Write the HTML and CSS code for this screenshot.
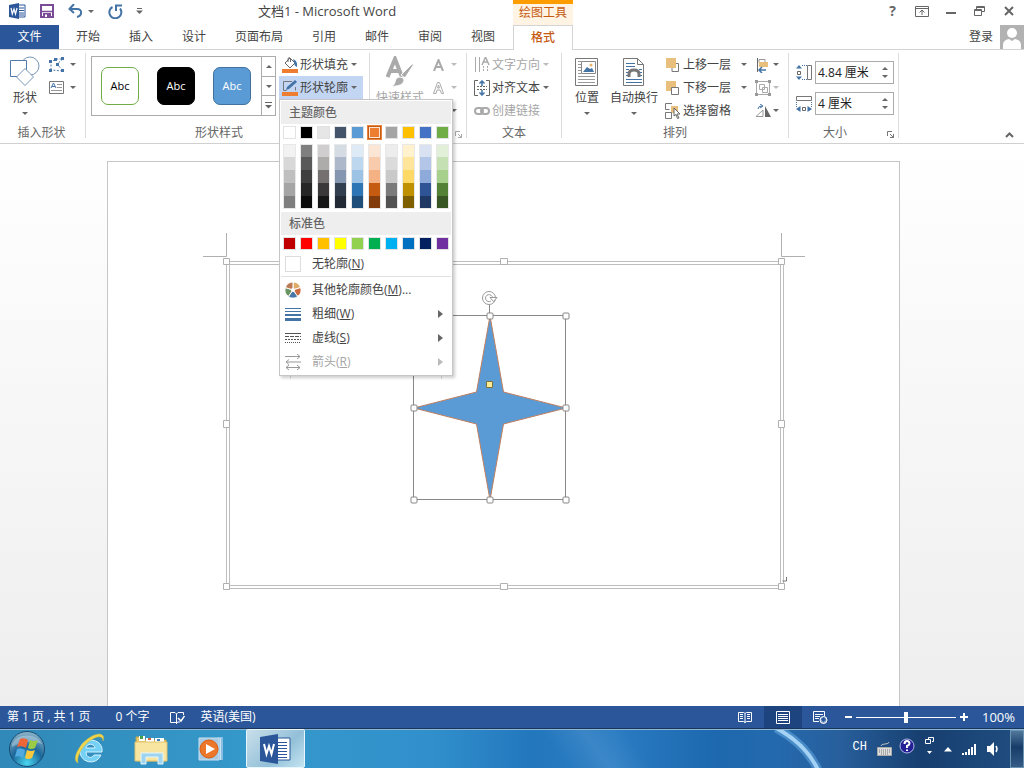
FILE: index.html
```html
<!DOCTYPE html>
<html lang="zh-CN">
<head>
<meta charset="utf-8">
<title>文档1 - Microsoft Word</title>
<link rel="stylesheet" href="styles.css">
</head>
<body>
<div class="app">
  <header class="titlebar">
    <div class="quick">
      <svg class="word-logo" width="17" height="16" viewBox="0 0 17 16"><path d="M8 2h8v12H8z" fill="#fff" stroke="#2b579a"/><path d="M10 5h5M10 7.500h5M10 10h5M10 12h5" stroke="#2b579a"/><path d="M0 2 10 0v16L0 14z" fill="#2b579a"/><path d="m2 5 1.300 6L5 6l1.500 5L8 5" fill="none" stroke="#fff" stroke-width="1.200"/></svg>
      <button class="plain" aria-label="保存"><svg width="14" height="14" viewBox="0 0 14 14"><path d="M1 1h12v12H1z" fill="#fff" stroke="#7a4b96" stroke-width="2"/><path d="M2 7.500h10" stroke="#7a4b96" stroke-width="1.500"/><path d="M3 9h8v5H3z" fill="#7a4b96"/><path d="M5 10.500h2V13H5z" fill="#fff"/></svg></button>
      <button class="plain undo" aria-label="撤消"><svg width="15" height="14" viewBox="0 0 15 14"><path d="M2 5h7c6 0 5 7 0 8" fill="none" stroke="#4473a5" stroke-width="2"/><path d="M6 0 1.500 5 6 9" fill="none" stroke="#4473a5" stroke-width="2"/></svg><i class="caret"></i></button>
      <button class="plain redo" aria-label="重复"><svg width="15" height="15" viewBox="0 0 15 15"><path d="M4.500 3A6 6 0 1 0 12 4.500" fill="none" stroke="#4473a5" stroke-width="2"/><path d="M8 7V1.500h6" fill="none" stroke="#4473a5" stroke-width="2"/></svg></button>
      <button class="plain more" aria-label="自定义快速访问工具栏"><svg width="7" height="6" viewBox="0 0 7 6"><path d="M1 .5h5" stroke="#666"/><path d="M0 2.500h7L3.500 6z" fill="#666"/></svg></button>
    </div>
    <h1 class="title">文档1 - Microsoft Word</h1>
    <div class="context-title">绘图工具</div>
    <div class="window-controls">
      <button class="plain" aria-label="帮助"><b>?</b></button>
      <button class="plain" aria-label="功能区显示选项"><svg width="14" height="11" viewBox="0 0 14 11"><path d="M.5.5h13v10H.5zM.5 2.500h13M7 9V4.500M4.500 6.500 7 4l2.500 2.500" fill="none" stroke="#666"/></svg></button>
      <button class="plain" aria-label="最小化"><svg width="10" height="9" viewBox="0 0 10 9"><path d="M0 6h10" stroke="#666" stroke-width="2"/></svg></button>
      <button class="plain" aria-label="还原"><svg width="11" height="10" viewBox="0 0 11 10"><path d="M2.500 3V.5h8v5H8M2.500 1.500h8M.5 3.500h7v6h-7zM.5 4.500h7" fill="none" stroke="#666"/></svg></button>
      <button class="plain" aria-label="关闭"><svg width="10" height="10" viewBox="0 0 10 10"><path d="m1 1 8 8M9 1 1 9" stroke="#666" stroke-width="2"/></svg></button>
    </div>
  </header>

  <nav class="tabs">
    <button class="tab file">文件</button>
    <div class="tab-list">
      <button class="tab">开始</button><button class="tab">插入</button><button class="tab">设计</button><button class="tab">页面布局</button><button class="tab">引用</button><button class="tab">邮件</button><button class="tab">审阅</button><button class="tab">视图</button>
    </div>
    <button class="tab active">格式</button>
    <a class="login" href="#">登录
      <svg width="24" height="24" viewBox="0 0 24 24"><path d="M0 0h24v24H0z" fill="#b2b2b2"/><circle cx="12" cy="8" r="5" fill="#fff"/><path d="M3 24v-4q0-5 6-6l3 2 3-2q6 1 6 6v4z" fill="#fff"/></svg></a>
  </nav>

  <section class="ribbon">
    <div class="group g-insert">
      <div class="group-body">
        <button class="big"><svg width="30" height="32" viewBox="0 0 30 32"><circle cx="20" cy="10" r="9" fill="#fff" stroke="#7795b5"/><path d="M.5 4.500h16v16H.5z" fill="#fff" stroke="#4f7bab"/><path d="M15 12.500 23.500 21 15 29.500 6.500 21z" fill="#fff" stroke="#7795b5"/></svg><span>形状</span><i class="caret"></i></button>
        <div class="stack">
          <button class="row"><svg width="16" height="16" viewBox="0 0 16 16"><path d="M2 13V5l5-3h7L8 7l6 7z" fill="none" stroke="#4f7bab" stroke-dasharray="2 1.500"/><path d="M0 3h3v3H0zM5 1h3v3H5zM12 0h3v3h-3zM7 6h3v3H7zM0 12h3v3H0zM12 12h3v3h-3z" fill="#4473a5"/></svg><i class="caret"></i></button>
          <button class="row"><svg width="15" height="13" viewBox="0 0 15 13"><path d="M.5.5h14v12H.5z" fill="#fff" stroke="#777"/><path d="m2 7 2.500-5L7 7M3 5.500h3" fill="none" stroke="#4473a5"/><path d="M8 3.500h5M8 6.500h5M2 9.500h11" stroke="#999"/></svg><i class="caret"></i></button>
        </div>
      </div>
      <div class="group-label">插入形状</div>
    </div>

    <div class="group g-styles">
      <div class="group-body">
        <div class="gallery">
          <button class="preset outline">Abc</button>
          <button class="preset black">Abc</button>
          <button class="preset blue">Abc</button>
          <div class="gallery-scroll">
            <button aria-label="上一行"><i class="caret up"></i></button>
            <button aria-label="下一行"><i class="caret"></i></button>
            <button aria-label="其他"><svg width="7" height="7" viewBox="0 0 7 7"><path d="M0 .5h7" stroke="#666"/><path d="M0 3h7L3.500 6.500z" fill="#666"/></svg></button>
          </div>
        </div>
        <div class="stack">
          <button class="row"><svg width="16" height="16" viewBox="0 0 16 16"><path d="m3 6 5-5 5 5-5 5z" fill="#fff" stroke="#666"/><path d="M6 5V1.500q1.500-2 2.500 0V5" fill="none" stroke="#666"/><path d="M11 2q5 2 4 8-3-1-3-5" fill="#4473a5"/><path d="M0 12h16v4H0z" fill="#ed7d31"/></svg><span>形状填充</span><i class="caret"></i></button>
          <div class="dropdown">
            <button class="row open" aria-expanded="true"><svg width="16" height="16" viewBox="0 0 16 16"><path d="M10 1.500H1.500v9h3M13.500 7v3.500" fill="none" stroke="#777"/><path d="m4 10 1-3 8-7 2 2-8 7z" fill="#4473a5"/><path d="M0 12h16v4H0z" fill="#ed7d31"/></svg><span>形状轮廓</span><i class="caret"></i></button>
            <div class="menu">
              <div class="menu-head">主题颜色</div>
              <div class="swatches" data-set="theme"></div>
              <div class="shades"></div>
              <div class="menu-head">标准色</div>
              <div class="swatches" data-set="standard"></div>
              <button class="menu-item none"><i class="empty"></i><span>无轮廓(<u>N</u>)</span></button>
              <hr>
              <button class="menu-item"><svg width="16" height="16" viewBox="0 0 16 16"><g stroke="#fff"><path d="M8 8V0a8 8 0 0 1 7.600 5.500z" fill="#dcab67"/><path d="m8 8 7.600-2.500A8 8 0 0 1 12.700 14.500z" fill="#cb6b42"/><path d="m8 8 4.700 6.500a8 8 0 0 1-9.400 0z" fill="#4878aa"/><path d="m8 8-4.700 6.500A8 8 0 0 1 .4 5.500z" fill="#6a9461"/><path d="M8 8 .4 5.500A8 8 0 0 1 8 0z" fill="#bb7954"/></g><circle cx="8" cy="8" r="2" fill="#fff"/></svg><span>其他轮廓颜色(<u>M</u>)...</span></button>
              <button class="menu-item"><svg width="16" height="14" viewBox="0 0 16 14"><path d="M0 1.500h16" stroke="#4473a5"/><path d="M0 4h16v1H0zM0 7h16v2H0zM0 11h16v3H0z" fill="#4473a5"/></svg><span>粗细(<u>W</u>)</span><i class="caret right"></i></button>
              <button class="menu-item"><svg width="16" height="12" viewBox="0 0 16 12"><path d="M0 1.500h16" stroke="#555"/><path d="M0 4.500h16" stroke="#555" stroke-dasharray="4 1"/><path d="M0 7.500h16" stroke="#555" stroke-dasharray="2 1"/><path d="M0 10.500h16" stroke="#555" stroke-dasharray="1 1"/></svg><span>虚线(<u>S</u>)</span><i class="caret right"></i></button>
              <button class="menu-item" disabled><svg width="16" height="16" viewBox="0 0 16 16"><path d="M0 2.500h15M12 0l3 2.500L12 5M1 8h15M4 5.500 1 8l3 2.500M1 13.500h14M4 11l-3 2.500L4 16M12 11l3 2.500-3 2.500" fill="none" stroke="#999"/></svg><span>箭头(<u>R</u>)</span><i class="caret right"></i></button>
            </div>
          </div>
        </div>
      </div>
      <div class="group-label">形状样式</div>
    </div>

    <div class="group g-art">
      <div class="group-body">
        <button class="big" disabled><svg width="28" height="32" viewBox="0 0 28 32"><path d="M1.500 21 9 3l7 18M5 15h9" fill="none" stroke="#aaa" stroke-width="4"/><path d="m28 8-9 14-4-3L26 8z" fill="#aaa" stroke="#fff"/><path d="M14 21q6 1 3 6-4 4-12 3 4-1 4-4 1-5 5-5" fill="#aaa" stroke="#fff"/></svg><span>快速样式</span></button>
        <div class="stack">
          <button class="row" disabled><svg width="11" height="12" viewBox="0 0 11 12"><path d="M1 12 5.500 1 10 12M3 8h5" fill="none" stroke="#aaa" stroke-width="2"/></svg><i class="caret"></i></button>
          <button class="row" disabled><svg width="11" height="12" viewBox="0 0 11 12"><path d="M.5 11.500 4.500.5h2l4 11h-2L7 8H4l-1 3.500zM4.500 6h2l-1-3z" fill="none" stroke="#aaa"/></svg><i class="caret"></i></button>
          <button class="row effect"><i class="caret"></i></button>
        </div>
      </div>
      <div class="group-label"><svg class="launcher pale" width="7" height="7" viewBox="0 0 7 7"><path d="M.5 5V.5H5M3 3l3.500 3.500M6.500 3v3.500H3" fill="none" stroke="currentColor"/></svg></div>
    </div>

    <div class="group g-text">
      <div class="group-body">
        <div class="stack">
          <button class="row" disabled><svg width="16" height="16" viewBox="0 0 16 16"><path d="M1.500 0v15M5.500 0v15" stroke="#aaa"/><path d="M9.500 9v6M13.500 9v6" stroke="#aaa" stroke-dasharray="2 1"/><path d="m8 8 3.500-8L15 8M9 5h5" fill="none" stroke="#aaa" stroke-width="1.500"/></svg><span>文字方向</span><i class="caret"></i></button>
          <button class="row"><svg width="16" height="16" viewBox="0 0 16 16"><path d="M4 .5H.5v15H4M12 .5h3.500v15H12" fill="none" stroke="#666"/><path d="M3 6.500h10M3 9.500h10" stroke="#666" stroke-dasharray="2 1"/><path d="M8 1v5M8 10v5M5.500 3.500 8 1l2.500 2.500M5.500 12.500 8 15l2.500-2.500" fill="none" stroke="#4473a5" stroke-width="1.500"/></svg><span>对齐文本</span><i class="caret"></i></button>
          <button class="row" disabled><svg width="16" height="10" viewBox="0 0 16 10"><rect x="1" y="2" width="8" height="6" rx="3" fill="none" stroke="#aaa" stroke-width="2"/><rect x="7" y="2" width="8" height="6" rx="3" fill="none" stroke="#aaa" stroke-width="2"/></svg><span>创建链接</span></button>
        </div>
      </div>
      <div class="group-label">文本</div>
    </div>

    <div class="group g-arrange">
      <div class="group-body">
        <button class="big"><svg width="24" height="32" viewBox="0 0 24 32"><path d="M.5 2.500h22v27H.5z" fill="#fff" stroke="#777"/><path d="M3 5.500h3M3 8.500h3M3 11.500h3M3 14.500h3M3 17.500h3M3 20.500h17M3 23.500h17M3 26.500h17" stroke="#999"/><path d="M6.500 5.500h14v12h-14z" fill="#fff" stroke="#888"/><path d="m8 16 4-5 3 2 2-1 2 4z" fill="#4473a5"/><circle cx="16" cy="9" r="1.500" fill="#e7b36a"/></svg><span>位置</span><i class="caret"></i></button>
        <button class="big wrap"><svg width="22" height="32" viewBox="0 0 22 32"><path d="M.5 2.500h14l6 6v21H.5zM14.500 2.500v6h6" fill="#fff" stroke="#777"/><path d="M3 7.500h9M3 10.500h9M3 13.500h3M16 13.500h3M3 16.500h2M17 16.500h2M3 19.500h2M17 19.500h2M3 23.500h16M3 26.500h16" stroke="#4473a5"/><path d="M6 21v-3q0-4 5-4t5 4v3" fill="none" stroke="#777" stroke-width="3"/></svg><span>自动换行</span><i class="caret"></i></button>
        <div class="stack layers">
          <button class="row"><svg width="15" height="16" viewBox="0 0 15 16"><path d="M7 8v6.500h6.500v-8H10" fill="none" stroke="#777"/><path d="M1 1h10v10H1z" fill="#e8bf7d"/></svg><span>上移一层</span><i class="caret"></i></button>
          <button class="row"><svg width="15" height="16" viewBox="0 0 15 16"><path d="M1 1h10v10H1z" fill="#e8bf7d"/><path d="M6.500 7.500h7v7h-7z" fill="#fff" stroke="#777"/></svg><span>下移一层</span><i class="caret"></i></button>
          <button class="row"><svg width="15" height="16" viewBox="0 0 15 16"><path d="M6 3h7v7H6z" fill="#e8bf7d"/><path d="M7 .5H.5v6h4M.5 9.500h6v6h-6z" fill="none" stroke="#777"/><path d="m9 5 6 6h-3l2 4-1.500.5-1.500-4L9 13z" fill="#fff" stroke="#666"/></svg><span>选择窗格</span></button>
        </div>
        <div class="stack">
          <button class="row"><svg width="16" height="16" viewBox="0 0 16 16"><path d="M2.500 1v14" stroke="#666"/><path d="M4 2.500h6v3H4z" fill="#fff" stroke="#999"/><path d="M4 5h9v5H4z" fill="#e8bf7d"/><path d="M4 13h7M7 10l-3 3 3 3" fill="none" stroke="#4473a5" stroke-width="1.500"/></svg><i class="caret"></i></button>
          <button class="row" disabled><svg width="16" height="16" viewBox="0 0 16 16"><path d="M1.500 1.500h13v13h-13zM4.500 4.500h5v5h-5zM7.500 7.500h5v5h-5z" fill="none" stroke="#aaa"/><path d="M0 0h3v3H0zM13 0h3v3h-3zM0 13h3v3H0zM13 13h3v3h-3z" fill="#999"/></svg><i class="caret"></i></button>
          <button class="row"><svg width="16" height="14" viewBox="0 0 16 14"><path d="M1 12.500h7V6z" fill="#fff" stroke="#999"/><path d="M10 2v11h6z" fill="#666"/><path d="M3 5q0-3 4-3M5 0l3 2-3 2" fill="none" stroke="#4473a5"/></svg><i class="caret"></i></button>
        </div>
      </div>
      <div class="group-label">排列</div>
    </div>

    <div class="group g-size">
      <div class="group-body">
        <label class="measure"><svg width="16" height="17" viewBox="0 0 16 17"><path d="M11.500 1.500h4v14h-4z" fill="#fff" stroke="#777"/><path d="M6 1.500h5M6 15.500h5" stroke="#4473a5" stroke-dasharray="1 1"/><path d="M1.500 7.500h3v3h-3z" fill="none" stroke="#666"/><path d="M0 4.500 3 1l3 3.500zM0 12.500 3 16l3-3.500z" fill="#4473a5"/></svg>
          <span class="spin"><input type="text" value="4.84 厘米" aria-label="高度"><span class="spin-buttons"><button aria-label="增加高度"><i class="caret up"></i></button><button aria-label="减小高度"><i class="caret"></i></button></span></span></label>
        <label class="measure"><svg width="16" height="17" viewBox="0 0 16 17"><path d="M.5 1.500h15v4H.5z" fill="#fff" stroke="#777"/><path d="M.5 7v5M15.500 7v5" stroke="#4473a5" stroke-dasharray="1 1"/><path d="M6.500 12.500h3v3h-3z" fill="none" stroke="#666"/><path d="M4.500 11v6L0 14zM11.500 11v6l4.500-3z" fill="#4473a5"/></svg>
          <span class="spin"><input type="text" value="4 厘米" aria-label="宽度"><span class="spin-buttons"><button aria-label="增加宽度"><i class="caret up"></i></button><button aria-label="减小宽度"><i class="caret"></i></button></span></span></label>
      </div>
      <div class="group-label">大小<svg class="launcher" width="7" height="7" viewBox="0 0 7 7"><path d="M.5 5V.5H5M3 3l3.500 3.500M6.500 3v3.500H3" fill="none" stroke="currentColor"/></svg></div>
    </div>
    <button class="plain collapse" aria-label="折叠功能区"><svg width="9" height="6" viewBox="0 0 9 6"><path d="m1 5 3.500-3.500L8 5" fill="none" stroke="#666" stroke-width="2"/></svg></button>
  </section>

  <main class="workspace">
    <div class="page">
      <svg class="drawing" width="602" height="362" viewBox="203 232 602 362">
        <path d="M203 256.500h23.500V233M805 256.500h-23.500V233" fill="none" stroke="#b0b0b0"/>
        <path d="M226.500 261.500h557v327h-557zM229.500 264.500h551v321h-551z" fill="none" stroke="#bebebe"/>
        <path d="M786.500 577v4h-4" fill="none" stroke="#777"/>
        <g fill="#fff" stroke="#b0b0b0">
          <path d="M223.500 258.500h6v6h-6zM500.500 258.500h7v6h-7zM778.500 258.500h6v6h-6zM223.500 420.500h6v7h-6zM778.500 420.500h6v7h-6zM223.500 583.500h6v6h-6zM500.500 583.500h7v6h-7zM778.500 583.500h6v6h-6z"/>
        </g>
        <path d="M413.500 315.500h152v184h-152zM489.500 303v12" fill="none" stroke="#888"/>
        <path d="M290.500 370v9M441.500 370v9" stroke="#ddd"/>
        <path d="m490 316 13.500 76 62.500 16-62.500 16L490 500l-13.500-76-62.500-16 62.500-16z" fill="#5b9bd5" stroke="#c07f5e"/>
        <g fill="#fff" stroke="#888">
          <rect x="411" y="313" width="6" height="6" rx="1"/><rect x="487" y="313" width="6" height="6" rx="1"/><rect x="563" y="313" width="6" height="6" rx="1"/>
          <rect x="411" y="405" width="6" height="6" rx="1"/><rect x="563" y="405" width="6" height="6" rx="1"/>
          <rect x="411" y="497" width="6" height="6" rx="1"/><rect x="487" y="497" width="6" height="6" rx="1"/><rect x="563" y="497" width="6" height="6" rx="1"/>
        </g>
        <path d="M486.500 381.500h6v6h-6z" fill="#ffec94" stroke="#7a7340"/>
        <circle cx="489" cy="298" r="6.500" fill="#fff" stroke="#999"/>
        <path d="M491 301a3.500 3.500 0 1 1 1.500-3" fill="none" stroke="#999"/>
        <path d="M490 297.500h7l-3.500 4z" fill="#fff" stroke="#999"/>
      </svg>
    </div>
  </main>

  <footer class="statusbar">
    <span class="pages">第 1 页 , 共 1 页</span>
    <span class="words">0 个字</span>
    <svg class="proof" width="15" height="13" viewBox="0 0 15 13"><path d="M6 11.500H.5v-10H5L6.500 3v10M6.500 3 8 1.500h5.500V4M6.500 12 8 11h2" fill="none" stroke="#fff"/><path d="m8 7 3 3 3.500-5" fill="none" stroke="#fff" stroke-width="1.500"/></svg>
    <span>英语(美国)</span>
    <div class="views">
      <button class="view" aria-label="阅读视图"><svg width="14" height="12" viewBox="0 0 14 12"><path d="M.5 1.500h5L7 2.500l1.500-1h5v9h-5L7 11.500l-1.500-1h-5zM7 3v9M2 3.500h3M2 5.500h3M2 7.500h3M9 3.500h3M9 5.500h3M9 7.500h3" fill="none" stroke="#fff"/></svg></button>
      <button class="view current" aria-label="页面视图"><svg width="14" height="13" viewBox="0 0 14 13"><path d="M.5.5h13v12H.5zM2 3.500h10M2 5.500h10M2 7.500h10M2 9.500h10" fill="none" stroke="#fff"/></svg></button>
      <button class="view" aria-label="Web 版式视图"><svg width="15" height="13" viewBox="0 0 15 13"><path d="M6 10.500H.5v-10h11V5M2 3.500h8M2 5.500h5M2 7.500h4" fill="none" stroke="#fff"/><circle cx="10.500" cy="9" r="3.500" fill="#8da8cf" stroke="#fff"/><path d="m8 8 3-2 2 3-3 2z" fill="#2b579a"/></svg></button>
    </div>
    <div class="zoom">
      <button class="plain" aria-label="缩小"><svg width="7" height="8" viewBox="0 0 7 8"><path d="M0 4h7" stroke="#fff" stroke-width="2"/></svg></button>
      <input type="range" min="0" max="100" value="50" aria-label="显示比例">
      <button class="plain" aria-label="放大"><svg width="8" height="8" viewBox="0 0 8 8"><path d="M0 4h8M4 0v8" stroke="#fff" stroke-width="2"/></svg></button>
    </div>
    <span class="percent">100%</span>
  </footer>

  <footer class="taskbar">
    <button class="plain orb" aria-label="开始"><svg width="38" height="38" viewBox="0 0 38 38"><defs><radialGradient id="orb" cx=".5" cy=".9" r=".9"><stop offset="0" stop-color="#49d6f0"/><stop offset=".5" stop-color="#1c679b"/><stop offset="1" stop-color="#8fb6ca"/></radialGradient></defs><circle cx="19" cy="19" r="17.500" fill="url(#orb)" stroke="#164a70"/><path d="M4 14a16 13 0 0 1 30 0q-15-5-30 3z" fill="#fff" opacity=".3"/><path d="M12 9q4-2 8 1l-2 8q-4-3-9-1z" fill="#ee6538"/><path d="M22 10q4 2 8 0l-3 8q-4 2-7 0z" fill="#9bcb45"/><path d="M9 19q4-2 8 1l-2 8q-4-3-8-1z" fill="#51a9df"/><path d="M19 20q4 2 8 0l-3 8q-4 2-7 0z" fill="#fac83c"/></svg></button>
    <button class="plain" aria-label="Internet Explorer"><svg width="34" height="34" viewBox="0 0 34 34"><path d="M17 8a11 11 0 1 0 11 15h-7c-2 4-8 3-8-3h16c1-7-4-12-12-12m-4 8c1-5 8-5 9 0z" fill="#75d0f5" stroke="#d4f3ff" fill-rule="evenodd"/><path d="M5 31C-4 27 12 2 27 2q5 1 3 7 0-5-6-4C12 9 3 23 5 31" fill="#efd54b" stroke="#d2bb3e" stroke-width=".5"/></svg></button>
    <button class="plain" aria-label="文件资源管理器"><svg width="34" height="32" viewBox="0 0 34 32"><path d="M2 4h7l2 3h21v21H3z" fill="#e9ca68" stroke="#c2a44b"/><path d="M5 3h6v5H5zM12 5h8v4h-8zM21 5h9v5h-9z" fill="#fff"/><path d="M6 3h3v3H6z" fill="#40a34c"/><path d="M14 5h3v2h-3z" fill="#d7603c"/><path d="M23 6h3v2h-3z" fill="#4286b8"/><path d="M1 9h32v19H1z" fill="#f8e6a0" stroke="#dfc270"/><path d="M7 31V20h22v11h-5v-7H12v7z" fill="#9ed4f0" stroke="#e4f6ff"/></svg></button>
    <button class="plain" aria-label="Windows Media Player"><svg width="26" height="26" viewBox="0 0 26 26"><path d="M20 1h5v23h-5z" fill="#87bde0"/><path d="M22.500 2v22" stroke="#c8e5f7"/><path d="M1 2h20v22H1z" fill="#a9c9e2" stroke="#c8e0f1"/><circle cx="11" cy="13" r="9" fill="#ec762a" stroke="#d95f13"/><path d="m8 8 9 5-9 5z" fill="#fff"/></svg></button>
    <button class="plain running" aria-label="Microsoft Word"><svg width="31" height="30" viewBox="0 0 31 30"><path d="M14 4h16v22H14z" fill="#fff" stroke="#2b579a"/><path d="M18 8.500h9M18 11.500h9M18 14.500h9M18 17.500h9M18 20.500h9M18 23.500h9" stroke="#2b579a"/><path d="M0 3 18 0v30L0 27z" fill="#2b579a"/><path d="m4 10 2.500 10L9 12l2.500 8L14 10" fill="none" stroke="#fff" stroke-width="2"/></svg></button>
    <div class="tray">
      <svg class="streak" width="70" height="38" viewBox="0 0 70 38"><path d="M4-2Q34 14 46 40" fill="none" stroke="#5fa3dc" stroke-width="9" opacity=".6"/><path d="M4-2Q34 14 46 40" fill="none" stroke="#a4d2f5" stroke-width="4"/></svg>
      <span class="lang">CH</span>
      <svg width="15" height="14" viewBox="0 0 15 14"><path d="M4 4q0-2 4-2t4-2" fill="none" stroke="#bbb"/><path d="M.5 5.500h14v8H.5z" fill="#ddd" stroke="#aaa"/><path d="M2 8h11M2 10h11M4 12h7" stroke="#777" stroke-dasharray="1 1"/></svg>
      <svg class="help" width="16" height="16" viewBox="0 0 16 16"><circle cx="8" cy="8" r="7" fill="#241f95" stroke="#b1b5e5"/><path d="M5.500 6q0-3 2.500-3t2.500 2.500Q10.500 7 8 8v2M8 11.500v1.500" fill="none" stroke="#fff" stroke-width="2"/></svg>
      <svg class="langbar" width="9" height="18" viewBox="0 0 9 18"><path d="M3.500 2V.5h5v4H7M.5 2.500h5v4h-5z" fill="none" stroke="#fff"/><path d="M2 14h5l-2.500 3z" fill="#fff"/></svg>
      <svg width="8" height="5" viewBox="0 0 8 5"><path d="m4 0 4 4.500H0z" fill="#fff"/></svg>
      <svg width="15" height="13" viewBox="0 0 15 13"><path d="M1 10v2M4 9v3M7 6v6M10 4v8M13 1v11" stroke="#fff" stroke-width="2"/></svg>
      <svg width="13" height="14" viewBox="0 0 13 14"><path d="M0 4h3l4-4v14l-4-4H0z" fill="#fff"/><path d="M9 4q2 3 0 6" fill="none" stroke="#fff" stroke-width="1.500"/></svg>
      <button class="show-desktop" aria-label="显示桌面"></button>
    </div>
  </footer>
</div>
<script src="script.js"></script>
</body>
</html>
```

FILE: styles.css
```css
* { box-sizing: border-box; }
body { margin: 0; font: 12px/16px "Open Sans", "Noto Sans CJK SC", sans-serif; color: #444; }
button, input { font: inherit; color: inherit; margin: 0; padding: 0; border: 0; background: none; }
button { display: flex; align-items: center; white-space: nowrap; }
button:disabled { color: #a6a6a6; }
svg { display: block; flex: none; }
.app { display: flex; flex-direction: column; height: 100vh; overflow: hidden; background: #fff; }
.plain { justify-content: center; }

.caret { flex: none; width: 0; height: 0; border: 3px solid transparent; border-top-color: #666; border-bottom: 0; }
.caret.up { border-top: 0; border-bottom: 3px solid #666; }
.caret.right { border: 4px solid transparent; border-left: 5px solid #666; border-right: 0; }
:disabled .caret { border-top-color: #bbb; }
:disabled .caret.right { border-top-color: transparent; border-left-color: #bbb; }

.titlebar { flex: none; display: grid; grid-template-columns: 141px 372px 60px 1fr; height: 25px; }
.quick { display: flex; align-items: center; padding: 0 0 3px 9px; }
.quick .plain { margin-left: 14px; }
.quick .more { margin-left: 13px; }
.quick .undo { gap: 5px; }
.title { margin: 0; font-size: 13px; font-weight: 400; line-height: 23px; text-align: center; white-space: nowrap; }
.context-title { border-top: 4px solid #ff9c00; background: #fff4e3; color: #c55a11; line-height: 18px; text-align: center; }
.window-controls { display: flex; justify-content: flex-end; padding: 0 1px 3px 0; }
.window-controls .plain { width: 29px; }
.window-controls b { font-size: 14px; color: #666; }

.tabs { flex: none; display: flex; height: 25px; border-bottom: 1px solid #d4d4d4; }
.tab { height: 24px; }
.tab.file { width: 59px; justify-content: center; background: #2b579a; color: #fff; }
.tab-list { display: flex; gap: 29px; padding: 0 18px 0 17px; }
.tab.active { width: 60px; height: 25px; justify-content: center; border: 1px solid #d4d4d4; border-bottom: 0; background: #fff; color: #c55a11; font-weight: 500; }
.login { display: flex; align-items: center; gap: 7px; height: 24px; margin-left: auto; color: #444; text-decoration: none; }

.ribbon { flex: none; display: flex; height: 94px; border-bottom: 1px solid #d0d0d0; }
.group { flex: none; display: flex; flex-direction: column; margin: 3px 0 5px; border-right: 1px solid #dcdcdc; }
.group-body { flex: 1; display: flex; align-items: flex-start; }
.group-label { position: relative; height: 16px; color: #666; line-height: 22px; text-align: center; }
.g-insert { width: 86px; padding-left: 10px; }
.g-insert .group-label { padding-right: 12px; }
.g-styles { width: 284px; padding-left: 5px; }
.g-styles .group-label { padding-right: 22px; }
.g-art { width: 97px; padding-left: 6px; }
.g-text { width: 95px; padding-left: 7px; }
.g-text .group-label { padding-right: 7px; }
.g-arrange { width: 227px; padding-left: 10px; }
.g-arrange .group-label { padding-right: 10px; }
.g-size { width: 110px; padding-left: 7px; }
.g-size .group-body { flex-direction: column; gap: 8px; padding-top: 8px; }
.g-size .group-label { padding-right: 24px; }
.launcher { position: absolute; right: 4px; top: 9px; color: #777; }
.launcher.pale { color: #aaa; }

.big { flex-direction: column; min-width: 30px; height: 67px; padding-top: 3px; }
.big span { line-height: 20px; }
.big .caret { margin-top: 4px; }
.stack { display: flex; flex-direction: column; }
.row { height: 23px; gap: 3px; }
.row .caret { margin-left: 1px; }
.g-insert .stack { padding-left: 9px; }
.g-insert .row { width: 27px; justify-content: space-between; }
.g-art .row { width: 24px; justify-content: space-between; }
.g-art .stack { padding-left: 9px; }
.g-art .effect { justify-content: flex-end; }
.g-styles .stack { padding-left: 3px; }
.g-styles .row { width: 84px; padding-left: 3px; gap: 2px; }
.g-styles .row.open { background: #c2d5f2; }
.g-text .row { gap: 2px; }
.g-arrange .wrap { margin-left: 8px; }
.layers { padding: 0 8px 0 7px; }
.layers .row { width: 82px; gap: 3px; }
.layers .caret { margin-left: auto; }
.layers + .stack .row { gap: 1px; }

.gallery { display: flex; gap: 18px; width: 185px; height: 60px; margin-top: 3px; padding-left: 9px; border: 1px solid #ababab; align-items: center; }
.preset { flex: none; width: 38px; height: 38px; border: 1px solid; border-radius: 7px; justify-content: center; font-size: 11px; }
.preset.outline { border-color: #70ad47; color: #000; }
.preset.black { border-color: #000; background: #000; color: #fff; }
.preset.blue { border-color: #41719c; background: #5b9bd5; color: #fff; }
.gallery-scroll { display: flex; flex-direction: column; align-self: stretch; width: 14px; margin-left: -8px; border-left: 1px solid #ababab; }
.gallery-scroll button { flex: 1; justify-content: center; }
.gallery-scroll button + button { border-top: 1px solid #ababab; }

.measure { display: flex; align-items: center; gap: 3px; }
.spin { display: flex; width: 79px; height: 23px; border: 1px solid #ababab; }
.spin input { flex: 1; min-width: 0; padding-left: 2px; color: #222; }
.spin-buttons { display: flex; flex-direction: column; justify-content: space-evenly; width: 11px; }
.collapse { align-self: flex-end; margin-left: auto; padding: 0 10px 5px 0; }

.dropdown { position: relative; }
.menu { position: absolute; z-index: 5; top: 23px; left: 0; width: 174px; padding: 1px; border: 1px solid #c6c6c6; background: #fff; box-shadow: 2px 2px 3px rgba(0, 0, 0, .2); }
.menu-head { height: 23px; padding-left: 8px; background: #eee; color: #666; font-weight: 500; line-height: 24px; }
.swatches, .shades { display: grid; grid-template-columns: repeat(10, 13px); gap: 4px; padding: 2px 0 0 2px; }
.swatch { height: 13px; border: 1px solid #e2e2e2; }
.swatch.selected { border-color: #c55a11; outline: 1px solid #e8833f; box-shadow: inset 0 0 0 1px #fce4d6; }
.shades { padding: 5px 0 3px 2px; }
.shade-column { border: 1px solid #e8e8e8; }
.shade { width: 11px; height: 13px; }
.shade:first-child, .shade:last-child { height: 12px; }
.menu-item { width: 100%; height: 24px; gap: 11px; padding: 0 8px 0 4px; }
.menu-item.none { height: 26px; padding-top: 1px; }
.menu-item .right { margin-left: auto; }
.empty { width: 16px; height: 16px; border: 1px solid #ddd; }
.menu hr { margin: 0 0 1px; border: 0; border-top: 1px solid #e1e1e1; }

.workspace { flex: 1; display: flex; justify-content: center; min-height: 0; padding: 17px 17px 0 0; overflow: hidden; background: linear-gradient(#fff, #eee); }
.page { width: 793px; padding-top: 70px; border: 1px solid #c6c6c6; border-bottom: 0; background: #fff; }
.drawing { margin: 0 auto; }

.statusbar { flex: none; display: flex; align-items: center; height: 22px; padding: 0 9px 0 7px; background: #2b579a; color: #fff; white-space: nowrap; }
.words { margin-left: 25px; }
.proof { margin: 0 16px 0 20px; }
.views { display: flex; height: 22px; margin-left: auto; }
.view { width: 38px; justify-content: center; }
.view.current { background: #1e4480; }
.zoom { display: flex; align-items: center; gap: 2px; margin-left: 5px; }
.zoom input { appearance: none; margin: 0; width: 104px; height: 12px; background: linear-gradient(#fff, #fff) center / 100px 1px no-repeat; }
.zoom input::-webkit-slider-thumb { appearance: none; width: 4px; height: 11px; background: #fff; }
.percent { margin-left: 14px; font-size: 13px; }

.taskbar { flex: none; display: flex; align-items: center; height: 40px; padding-left: 8px; border-top: 1px solid #19365a; box-shadow: inset 0 1px #8db7d6; background: linear-gradient(55deg, transparent 0 54%, #ffffff16 58%, transparent 62%), linear-gradient(90deg, #3089b8, #3599cb 25%, #3190cc 42%, #2377bd 52%, #2a7cc3 60%, #1d68ae 70%, #2469ad 76%, #285f9c 82%, #173f70 90%, #204d80); }
.taskbar > .plain { flex: none; }
.orb + .plain { margin-left: 27px; }
.orb + .plain + .plain { margin-left: 27px; }
.orb + .plain + .plain + .plain { margin-left: 30px; }
.taskbar > .running { width: 59px; height: 39px; margin-left: 22px; border: 1px solid #e7f5fc; border-radius: 2px; background: linear-gradient(135deg, #c9dfea, #93c0d8 60%, #c5e5f2); }
.tray { flex: 1; display: flex; align-items: center; justify-content: flex-end; align-self: stretch; margin-top: 1px; gap: 10px; }
.streak { margin-right: 1px; }
.lang { font: 12px/16px "Liberation Mono", monospace; color: #fff; margin-bottom: 4px; }
.tray .help { margin: 0 0 6px -3px; }
.tray .langbar { margin-bottom: 6px; }
.show-desktop { align-self: stretch; width: 14px; border: 1px solid #6d93b2; background: linear-gradient(#52779c, #173c68 45%, #345c87); }
```

FILE: script.js
```javascript
const palettes = {
  theme: ["#ffffff", "#000000", "#e7e6e6", "#44546a", "#5b9bd5", "#ed7d31", "#a5a5a5", "#ffc000", "#4472c4", "#70ad47"],
  standard: ["#c00000", "#ff0000", "#ffc000", "#ffff00", "#92d050", "#00b050", "#00b0f0", "#0070c0", "#002060", "#7030a0"]
};

const shades = [
  ["#f2f2f2", "#d8d8d8", "#bfbfbf", "#a5a5a5", "#7f7f7f"],
  ["#7f7f7f", "#595959", "#3f3f3f", "#262626", "#0c0c0c"],
  ["#d0cece", "#aeabab", "#757070", "#3a3838", "#171616"],
  ["#d6dce4", "#adb9ca", "#8496b0", "#323f4f", "#222a35"],
  ["#deebf6", "#bdd7ee", "#9cc3e5", "#2e75b5", "#1e4e79"],
  ["#fbe5d5", "#f7cbac", "#f4b183", "#c55a11", "#833c0b"],
  ["#ededed", "#dbdbdb", "#c9c9c9", "#7b7b7b", "#525252"],
  ["#fff2cc", "#fee599", "#ffd965", "#bf9000", "#7f6000"],
  ["#d9e2f3", "#b4c6e7", "#8eaadb", "#2f5496", "#1f3864"],
  ["#e2efd9", "#c5e0b3", "#a8d08d", "#538135", "#375623"]
];

function colorButton(className, color) {
  const button = document.createElement("button");
  button.className = className;
  button.style.background = color;
  button.setAttribute("aria-label", color);
  return button;
}

document.querySelectorAll(".swatches").forEach(row => {
  palettes[row.dataset.set].forEach((color, i) => {
    const selected = row.dataset.set === "theme" && i === 5;
    row.append(colorButton(selected ? "swatch selected" : "swatch", color));
  });
});

const shadeGrid = document.querySelector(".shades");
shades.forEach(column => {
  const box = document.createElement("div");
  box.className = "shade-column";
  column.forEach(color => box.append(colorButton("shade", color)));
  shadeGrid.append(box);
});
```
